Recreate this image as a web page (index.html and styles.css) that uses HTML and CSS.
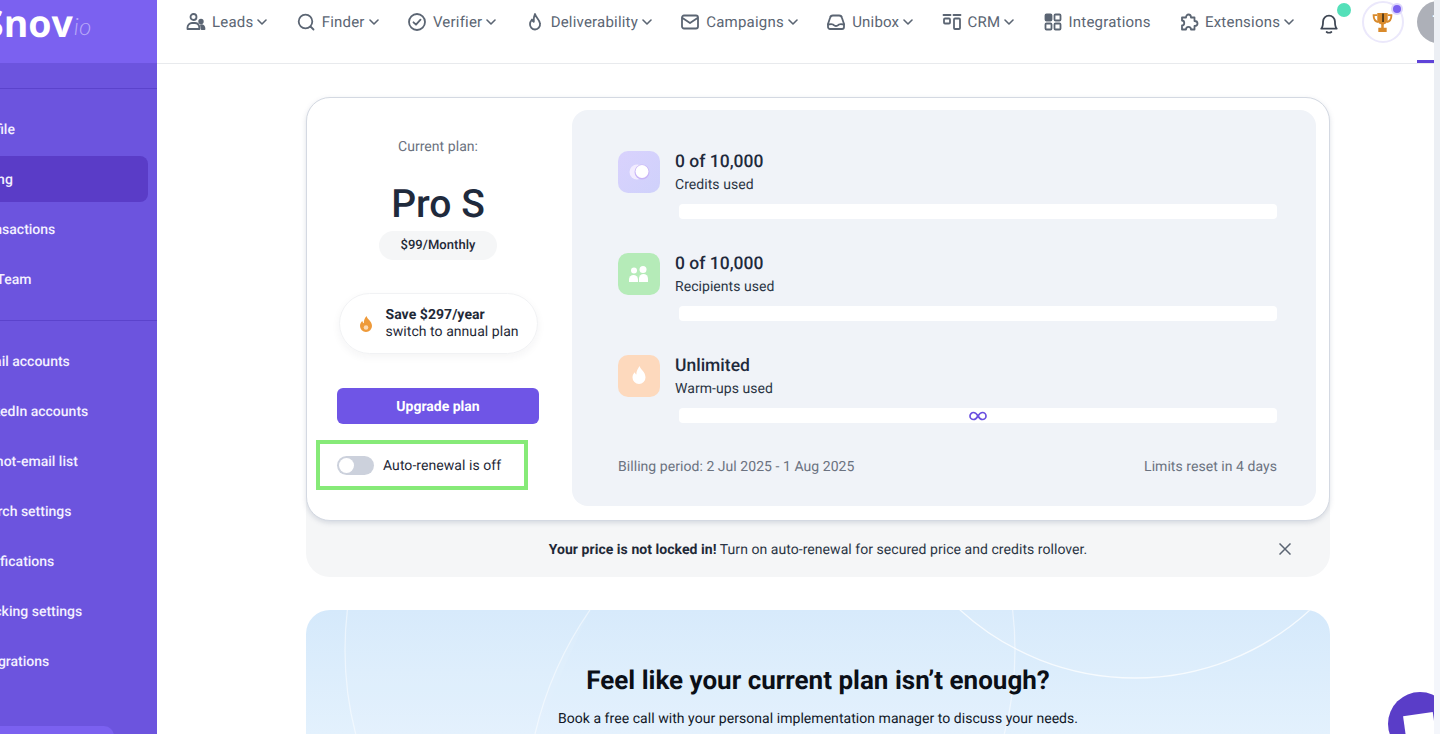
FILE: index.html
```html
<!DOCTYPE html>
<html lang="en">
<head>
<meta charset="utf-8">
<title>Billing</title>
<link rel="stylesheet" href="styles.css">
</head>
<body>
<div class="app">
  <aside class="sidebar">
    <div class="logo"><span class="logo-word">Snov</span><span class="logo-io">io</span></div>
    <div class="side-body">
      <hr class="side-rule">
      <nav class="side-group">
        <a class="side-item">Profile</a>
        <a class="side-item active">Billing</a>
        <a class="side-item">Transactions</a>
        <a class="side-item">My Team</a>
      </nav>
      <hr class="side-rule">
      <nav class="side-group">
        <a class="side-item">Email accounts</a>
        <a class="side-item">LinkedIn accounts</a>
        <a class="side-item">Do-not-email list</a>
        <a class="side-item">Search settings</a>
        <a class="side-item">Notifications</a>
        <a class="side-item">Tracking settings</a>
        <a class="side-item">Integrations</a>
      </nav>
      <div class="side-cta"></div>
    </div>
  </aside>

  <div class="content">
    <header class="topbar">
      <a class="nav-item"><svg class="ni" viewBox="0 0 20 20"><circle cx="7.500" cy="5" r="3"/><path d="M1.500 17v-1.500A4.500 4.500 0 0 1 6 11h3a4.500 4.500 0 0 1 4 2.600l.4 3.400z"/><circle cx="15" cy="9.500" r="1.800" class="fill"/><path d="M15 13.200c2 0 3.500 1.300 3.500 3.800h-3l-.5-3.800z" class="fill"/></svg><span>Leads</span><svg class="chev" viewBox="0 0 10 6"><path d="M1 1l4 4 4-4"/></svg></a>
      <a class="nav-item"><svg class="ni" viewBox="0 0 20 20"><circle cx="9.500" cy="9.500" r="6.800"/><path d="M14.500 14.500l3 3"/></svg><span>Finder</span><svg class="chev" viewBox="0 0 10 6"><path d="M1 1l4 4 4-4"/></svg></a>
      <a class="nav-item"><svg class="ni" viewBox="0 0 20 20"><circle cx="10" cy="10" r="8"/><path d="M6.500 10.300l2.500 2.400 4.500-5"/></svg><span>Verifier</span><svg class="chev" viewBox="0 0 10 6"><path d="M1 1l4 4 4-4"/></svg></a>
      <a class="nav-item"><svg class="ni" viewBox="0 0 20 20"><path d="M10 2c.5 3 4.500 5.500 5 9.500A5.200 5.200 0 0 1 10 17.500a5.200 5.200 0 0 1-5-5.500c0-2 1-3.300 2-4.500.3 1.300 1 2 1.800 2.300C8.500 7 9 4 10 2z"/></svg><span>Deliverability</span><svg class="chev" viewBox="0 0 10 6"><path d="M1 1l4 4 4-4"/></svg></a>
      <a class="nav-item"><svg class="ni" viewBox="0 0 20 20"><rect x="2" y="3.500" width="16" height="13" rx="2"/><path d="M2.500 6l7.500 5 7.500-5"/></svg><span>Campaigns</span><svg class="chev" viewBox="0 0 10 6"><path d="M1 1l4 4 4-4"/></svg></a>
      <a class="nav-item"><svg class="ni" viewBox="0 0 20 20"><path d="M2 12l2-6a3 3 0 0 1 3-2.500h6A3 3 0 0 1 16 6l2 6v3a2 2 0 0 1-2 2H4a2 2 0 0 1-2-2z"/><path d="M2 12.500c3-.5 4-.5 5 0s1 1.500 3 1.500 2-1 3-1.500 2-.5 5 0"/></svg><span>Unibox</span><svg class="chev" viewBox="0 0 10 6"><path d="M1 1l4 4 4-4"/></svg></a>
      <a class="nav-item"><svg class="ni" viewBox="0 0 20 20"><path d="M1.500 3h7M11.500 3h7"/><rect x="2" y="6.500" width="6" height="5" rx="1"/><rect x="12" y="6.500" width="6" height="10.500" rx="1"/></svg><span>CRM</span><svg class="chev" viewBox="0 0 10 6"><path d="M1 1l4 4 4-4"/></svg></a>
      <a class="nav-item"><svg class="ni" viewBox="0 0 20 20"><rect x="2.500" y="2.500" width="6" height="6" rx="1" class="fill"/><rect x="11.500" y="2.500" width="6" height="6" rx="1"/><rect x="2.500" y="11.500" width="6" height="6" rx="1"/><rect x="11.500" y="11.500" width="6" height="6" rx="1"/></svg><span>Integrations</span></a>
      <a class="nav-item"><svg class="ni" viewBox="0 0 20 20"><path d="M7 5.500c0-4 5-4 5 0h3.500v3.500c4 0 4 5 0 5v3.500H12c0-3.500-5-3.500-5 0H3v-4c3 0 3-5 0-5v-3z"/></svg><span>Extensions</span><svg class="chev" viewBox="0 0 10 6"><path d="M1 1l4 4 4-4"/></svg></a>
      <div class="bell">
        <svg viewBox="2.500 1 15 18.500"><path d="M3.500 15c1.500-1.500 1.500-3 1.500-6a5 5 0 0 1 10 0c0 3 0 4.500 1.500 6z"/><path d="M8 17.800c1 .8 3 .8 4 0"/></svg>
        <i class="dot-green"></i>
      </div>
      <div class="trophy">
        <svg viewBox="0 0 20 22"><path class="t-cup" d="M5 2h10v6c0 3-2 5-5 5s-5-2-5-5z"/><path class="t-rim" d="M5 4H1.500c0 4 1.500 6 4.500 6.500M15 4h3.500c0 4-1.500 6-4.500 6.500"/><path class="t-cup" d="M8.800 12h2.400v4H14v4H6v-4h2.800z"/><path class="t-line" d="M10.500 2.500v8"/></svg>
        <i class="dot-purple"></i>
      </div>
      <div class="avatar">T</div>
    </header>

    <main class="page">
      <section class="plan-card">
        <div class="plan-left">
          <p class="plan-label">Current plan:</p>
          <h1 class="plan-name">Pro S</h1>
          <span class="plan-price">$99/Monthly</span>
          <div class="save-pill">
            <svg class="save-flame" viewBox="0 0 14 16"><path d="M7.500 0c.5 3 5.500 5 5.500 10a6 6 0 0 1-6 6 6 6 0 0 1-6-6c0-2.500 1.200-4 2.400-5 .2 1.400.8 2 1.500 2.300C4.500 4.500 6 2 7.500 0z"/><circle cx="7" cy="11.500" r="2.300" class="flame-in"/></svg>
            <div class="save-text"><strong>Save $297/year</strong><span>switch to annual plan</span></div>
          </div>
          <button class="upgrade">Upgrade plan</button>
          <div class="renew">
            <span class="toggle"><i></i></span>
            <span class="renew-label">Auto-renewal is off</span>
          </div>
        </div>

        <div class="usage">
          <div class="usage-row">
            <div class="usage-head">
              <div class="uicon violet"><svg viewBox="0 0 42 42"><circle cx="19" cy="21" r="7.500" fill="#f2ecff"/><circle cx="24" cy="21" r="7.500" fill="#c9b6f7"/><circle cx="24" cy="20.500" r="6.500" fill="#fff"/></svg></div>
              <div class="utext"><div class="uval">0 of 10,000</div><div class="ulabel">Credits used</div></div>
            </div>
            <div class="bar"></div>
          </div>
          <div class="usage-row">
            <div class="usage-head">
              <div class="uicon green"><svg viewBox="0 0 42 42"><circle cx="16" cy="17.500" r="3" fill="#fff"/><circle cx="25" cy="16.500" r="3.500" fill="#fff"/><path d="M11 29v-2.500a4.500 4.500 0 0 1 9 0V29z" fill="#fff"/><path d="M21 29v-3.500a4.500 4.500 0 0 1 9 0V29z" fill="#fff"/></svg></div>
              <div class="utext"><div class="uval">0 of 10,000</div><div class="ulabel">Recipients used</div></div>
            </div>
            <div class="bar"></div>
          </div>
          <div class="usage-row">
            <div class="usage-head">
              <div class="uicon peach"><svg viewBox="0 0 42 42"><path d="M21.500 11c.5 3 6 5.500 6 11.500a6.500 6.500 0 0 1-13 0c0-2.500 1-4 2.400-5.300.2 1.300.8 2 1.500 2.300-.4-3 1.700-6 3.100-8.500z" fill="#fff"/></svg></div>
              <div class="utext"><div class="uval">Unlimited</div><div class="ulabel">Warm-ups used</div></div>
            </div>
            <div class="bar bar-inf"><svg viewBox="0 0 18 10"><path d="M9 5C7.500 2.500 6 1.500 4.500 1.500a3.500 3.500 0 0 0 0 7C6 8.500 7.500 7.500 9 5c1.500-2.500 3-3.500 4.500-3.500a3.500 3.500 0 0 1 0 7C12 8.500 10.500 7.500 9 5z"/></svg></div>
          </div>
          <div class="usage-foot">
            <span>Billing period: 2 Jul 2025 - 1 Aug 2025</span>
            <span>Limits reset in 4 days</span>
          </div>
        </div>
      </section>

      <div class="notice">
        <span></span>
        <p><strong>Your price is not locked in!</strong> Turn on auto-renewal for secured price and credits rollover.</p>
        <svg class="close" viewBox="0 0 12 12"><path d="M.5.500l11 11M11.500.500l-11 11"/></svg>
      </div>

      <section class="promo">
        <svg class="promo-art" viewBox="0 0 1024 124">
          <circle class="arc" cx="374" cy="40" r="335"/>
          <path class="arc" d="M284 0A362 362 0 0 0 229 124"/>
          <circle class="arc arc-strong" cx="829" cy="-191" r="259"/>
        </svg>
        <h2>Feel like your current plan isn’t enough?</h2>
        <p>Book a free call with your personal implementation manager to discuss your needs.</p>
      </section>
    </main>
  </div>
</div>

<div class="chat"><i></i></div>
<div class="scrollbar"></div>
</body>
</html>
```
FILE: styles.css
```css
* { box-sizing: border-box; }
html, body { margin: 0; height: 100%; overflow: hidden; }
body { font-family: Roboto, "Liberation Sans", sans-serif; color: #1f2937; background: #fff; text-rendering: geometricPrecision; letter-spacing: .05px; }
p, h1, h2 { margin: 0; }

.app { display: flex; height: 734px; overflow: hidden; }

/* sidebar */
.sidebar { flex: 0 0 157px; width: 157px; background: #6c54de; overflow: hidden; display: flex; flex-direction: column; }
.logo { height: 63px; flex: none; background: #7b61f0; display: flex; align-items: flex-start; color: #fff; overflow: hidden; }
.logo-word { font-family: "Open Sans", Roboto, sans-serif; font-weight: 700; font-size: 37.500px; line-height: 46px; letter-spacing: 0; margin-left: -17px; flex: none; }
.logo-io { font-family: Lato, sans-serif; font-style: italic; font-weight: 300; font-size: 24px; line-height: 24px; margin: 15px 0 0 1px; color: #b9a9f8; }
.side-body { flex: 1; display: flex; flex-direction: column; padding-top: 25px; }
.side-rule { width: 100%; height: 1px; border: 0; margin: 0; background: #5b43cc; flex: none; }
.side-group { display: flex; flex-direction: column; gap: 4px; padding: 17px 9px 18px 0; margin-left: -26px; }
.side-item { display: flex; align-items: center; height: 46px; padding-top: 2px; color: #f3f0ff; font-size: 14px; font-weight: 500; letter-spacing: 0; white-space: nowrap; }
.side-item.active { background: #5a3cc7; border-radius: 8px; }
.side-cta { height: 40px; width: 114px; margin-top: 24px; flex: none; background: #7b61f0; border-radius: 0 10px 0 0; }

/* topbar */
.content { flex: 1; min-width: 0; display: flex; flex-direction: column; }
.topbar { height: 64px; flex: none; display: flex; align-items: flex-start; gap: 28.300px; padding: 12px 0 0 29px; border-bottom: 1px solid #e8eaed; white-space: nowrap; position: relative; }
.nav-item { display: flex; align-items: center; height: 20px; color: #5b6573; font-size: 15px; letter-spacing: .2px; flex: none; }
.nav-item span { margin-left: 6px; }
.ni { width: 20px; height: 20px; fill: none; stroke: #5b6573; stroke-width: 1.800; stroke-linecap: round; stroke-linejoin: round; }
.ni .fill { fill: #5b6573; }
.chev { width: 10px; height: 6px; margin-left: 4px; fill: none; stroke: #5b6573; stroke-width: 1.600; stroke-linecap: round; stroke-linejoin: round; }

.bell { position: relative; flex: none; width: 20px; height: 20px; margin-left: -3px; }
.bell svg { display: block; width: 20px; height: 22px; fill: none; stroke: #3f4754; stroke-width: 1.500; stroke-linejoin: round; stroke-linecap: round; }
.dot-green { position: absolute; left: 18px; top: -9px; width: 14px; height: 14px; border-radius: 50%; background: #54e0b9; }
.trophy { position: relative; flex: none; width: 42px; height: 42px; margin: -11px 0 0 -6px; border: 2px solid #ebe8fb; border-radius: 50%; display: flex; align-items: center; justify-content: center; background: #fff; }
.trophy svg { width: 21px; height: 23px; }
.t-cup { fill: #d98a2b; }
.t-rim { fill: none; stroke: #d98a2b; stroke-width: 1.800; }
.t-line { fill: none; stroke: #2d2416; stroke-width: 1.400; }
.dot-purple { position: absolute; right: -1px; top: 0; width: 12px; height: 12px; border-radius: 50%; background: #7b61f0; border: 2px solid #dcd5fb; }
.avatar { flex: none; width: 42px; height: 42px; margin: -11px 0 0 -15px; border-radius: 50%; background: #adb0b8; color: #fff; font-size: 18px; font-weight: 500; display: flex; align-items: center; justify-content: center; position: relative; }
.avatar::after { content: ""; position: absolute; left: 0; top: 59px; width: 17px; height: 3px; background: #5f43d8; }

/* page */
.page { flex: 1; padding: 33px 0 0 149px; overflow: hidden; }
.plan-card { position: relative; z-index: 1; width: 1024px; height: 424px; background: #fff; border: 1px solid #d4d9e2; border-radius: 24px; box-shadow: 0 2px 5px rgba(100, 116, 139, .22); display: flex; padding: 12px 13px 14px 0; }
.plan-left { flex: 0 0 265px; display: flex; flex-direction: column; align-items: center; padding-right: 3px; }
.plan-label { font-size: 14px; line-height: 20px; color: #6b7280; margin-top: 27px; }
.plan-name { font-size: 39px; line-height: 44px; font-weight: 500; letter-spacing: 0; color: #1f2a3c; margin-top: 25px; }
.plan-price { margin-top: 5px; height: 29px; width: 118px; padding-bottom: 1px; display: flex; align-items: center; justify-content: center; background: #f5f6f7; border-radius: 15px; font-size: 13px; font-weight: 500; color: #1f2937; }
.save-pill { margin-top: 33px; width: 199px; height: 61px; border: 1px solid #f1f2f4; border-radius: 31px; box-shadow: 0 3px 8px rgba(31, 41, 55, .05); display: flex; align-items: center; padding-left: 19px; gap: 13px; }
.save-flame { width: 14px; height: 16px; fill: #ee9a3a; flex: none; }
.flame-in { fill: #fbd9b3; }
.save-text { display: flex; flex-direction: column; font-size: 14px; line-height: 17px; color: #1f2937; }
.save-text strong { font-weight: 700; }
.upgrade { margin-top: 34px; width: 202px; height: 36px; padding: 2px 0 0; flex: none; border: 0; border-radius: 6px; background: #6f55e6; color: #fff; font: 700 14px Roboto, sans-serif; text-rendering: geometricPrecision; }
.renew { margin-top: 16px; align-self: flex-start; margin-left: 9px; width: 212px; height: 50px; border: 4px solid #86ea78; display: flex; align-items: center; padding-left: 17px; gap: 9px; font-size: 14px; color: #1f2937; flex: none; }
.renew-label { padding-top: 2px; }
.toggle { width: 37px; height: 19px; border-radius: 10px; background: #ccd1dc; padding: 2px; flex: none; display: block; }
.toggle i { display: block; width: 15px; height: 15px; border-radius: 50%; background: #fff; }

.usage { flex: 1; background: #f0f3f8; border-radius: 16px; padding: 41px 39px 0 46px; display: flex; flex-direction: column; }
.usage-row { height: 102px; flex: none; }
.usage-head { display: flex; gap: 15px; height: 53px; }
.utext { padding-top: 1px; }
.uicon { width: 42px; height: 42px; border-radius: 10px; flex: none; }
.uicon svg { display: block; width: 42px; height: 42px; }
.violet { background: linear-gradient(135deg, #d9d2fd, #cfd1fb); }
.green { background: #b5ebb8; }
.peach { background: #fdd9bd; }
.uval { font-size: 17.500px; line-height: 20px; font-weight: 500; letter-spacing: 0; color: #1f2a3c; }
.ulabel { font-size: 14px; line-height: 18px; margin-top: 4px; color: #2b3544; }
.bar { height: 15px; margin-left: 61px; background: #fff; border-radius: 4px; display: flex; align-items: center; justify-content: center; }
.bar-inf svg { width: 18px; height: 10px; fill: none; stroke: #6a4fe0; stroke-width: 1.700; }
.usage-foot { display: flex; justify-content: space-between; font-size: 14px; line-height: 20px; color: #6b7280; }

.notice { width: 1024px; height: 81px; margin-top: -24px; padding: 27px 39px 0; background: #f5f6f7; border-radius: 0 0 24px 24px; display: grid; grid-template-columns: 1fr auto 1fr; align-items: center; font-size: 14px; color: #2b3544; margin-top: -25px; }
.notice strong { font-weight: 700; color: #1f2937; }
.close { width: 12px; height: 12px; margin-bottom: 2px; justify-self: end; fill: none; stroke: #5b6573; stroke-width: 1.500; }

.promo { position: relative; margin-top: 33px; width: 1024px; height: 160px; border-radius: 24px 24px 0 0; background: linear-gradient(180deg, #d5e9fb 0, #e3f1fd 124px); overflow: hidden; text-align: center; padding-top: 54px; }
.promo-art { position: absolute; left: 0; top: 0; width: 1024px; height: 124px; }
.arc { fill: rgba(255, 255, 255, .06); stroke: rgba(255, 255, 255, .5); stroke-width: 1.300; }
.arc-strong { stroke: rgba(255, 255, 255, .75); }
.promo h2 { position: relative; font-size: 26px; line-height: 34px; font-weight: 700; letter-spacing: 0; color: #0b0f17; }
.promo p { position: relative; font-size: 14px; line-height: 20px; margin-top: 11px; color: #111827; }

/* floating */
.chat { position: fixed; left: 1388px; top: 692px; width: 64px; height: 64px; border-radius: 50%; background: #5a3dc8; overflow: hidden; }
.chat i { position: absolute; left: 17px; top: 22px; width: 30px; height: 30px; background: #fff; transform: rotate(-8deg); }
.scrollbar { position: fixed; left: 1434px; top: 0; width: 6px; height: 734px; background: #f4f6fb; }
.scrollbar::before { content: ""; position: absolute; left: 0; top: 0; width: 6px; height: 450px; background: #eceff4; }
```
